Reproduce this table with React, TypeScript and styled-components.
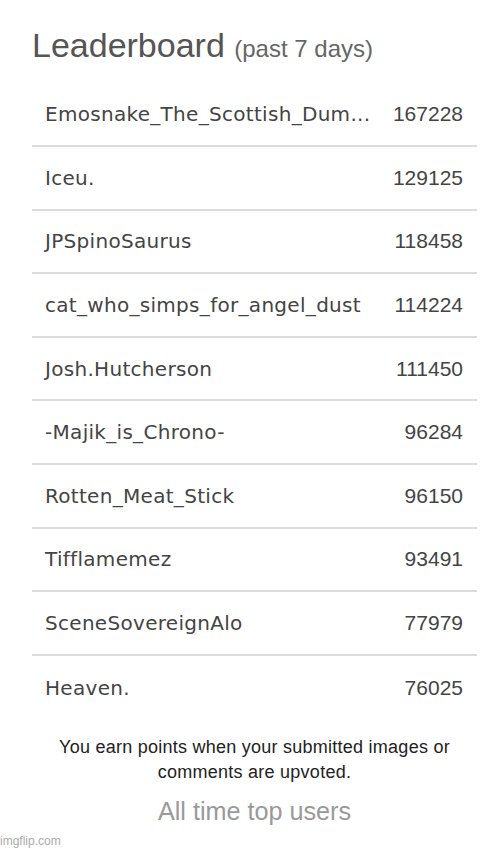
import styled, {createGlobalStyle} from "styled-components";

const GlobalStyle = createGlobalStyle`
  html, body {
    margin: 0;
    padding: 0;
    background: #ffffff;
  }
`

type Leader = {
    name: string;
    points: number;
}

const leaders: Leader[] = [
    {name: "Emosnake_The_Scottish_Dum...", points: 167228},
    {name: "Iceu.", points: 129125},
    {name: "JPSpinoSaurus", points: 118458},
    {name: "cat_who_simps_for_angel_dust", points: 114224},
    {name: "Josh.Hutcherson", points: 111450},
    {name: "-Majik_is_Chrono-", points: 96284},
    {name: "Rotten_Meat_Stick", points: 96150},
    {name: "Tifflamemez", points: 93491},
    {name: "SceneSovereignAlo", points: 77979},
    {name: "Heaven.", points: 76025},
];

export default function App() {
    return (
        <StyledPage>
            <GlobalStyle/>
            <StyledPanel>
                <StyledTitle>
                    Leaderboard <StyledSubTitle>(past 7 days)</StyledSubTitle>
                </StyledTitle>
                <StyledList>
                    {leaders.map((l, i) => (
                        <StyledRow key={l.name} last={i === leaders.length - 1}>
                            <StyledName>{l.name}</StyledName>
                            <StyledPoints>{l.points}</StyledPoints>
                        </StyledRow>
                    ))}
                </StyledList>
                <StyledNote>
                    You earn points when your submitted images or<br/>
                    comments are upvoted.
                </StyledNote>
                <StyledAllTime>All time top users</StyledAllTime>
            </StyledPanel>
            <StyledWatermark>imgflip.com</StyledWatermark>
        </StyledPage>
    )
}

const StyledPage = styled.div`
  position: relative;
  width: 500px;
  height: 850px;
  overflow: hidden;
  background: #fff;
`

const StyledPanel = styled.div`
  width: 445px;
  padding: 26px 0 0 32px;
  display: flex;
  flex-direction: column;
`

const StyledTitle = styled.h2`
  margin: 0;
  font-family: "Liberation Sans", Arial, sans-serif;
  font-weight: normal;
  font-size: 34px;
  line-height: 38px;
  color: #555;
  white-space: nowrap;
`

const StyledSubTitle = styled.span`
  font-size: 24px;
  color: #666;
`

const StyledList = styled.div`
  margin-top: 15.5px;
  display: flex;
  flex-direction: column;
`

const StyledRow = styled.div<{ last: boolean }>`
  box-sizing: border-box;
  height: 63.6px;
  padding: 0 14px 0 13px;
  display: flex;
  align-items: center;
  justify-content: space-between;
  border-bottom: ${props => props.last ? "none" : "2px solid #dcdcdc"};
`

const StyledName = styled.span`
  font-family: "DejaVu Sans", Verdana, sans-serif;
  font-size: 20px;
  letter-spacing: 0.3px;
  color: #444;
  white-space: nowrap;
`

const StyledPoints = styled.span`
  font-family: "Liberation Sans", Arial, sans-serif;
  font-size: 21px;
  color: #444;
`

const StyledNote = styled.p`
  margin: 16px 0 0;
  text-align: center;
  font-family: "Liberation Sans", Arial, sans-serif;
  font-size: 18px;
  letter-spacing: 0.25px;
  line-height: 25px;
  color: #222;
`

const StyledAllTime = styled.a`
  margin-top: 12px;
  text-align: center;
  font-family: "Liberation Sans", Arial, sans-serif;
  font-size: 25.2px;
  line-height: 28px;
  color: #999;
`

const StyledWatermark = styled.span`
  position: absolute;
  left: 0;
  bottom: 2px;
  font-family: "Liberation Sans", Arial, sans-serif;
  font-size: 12px;
  color: #aaa;
`
